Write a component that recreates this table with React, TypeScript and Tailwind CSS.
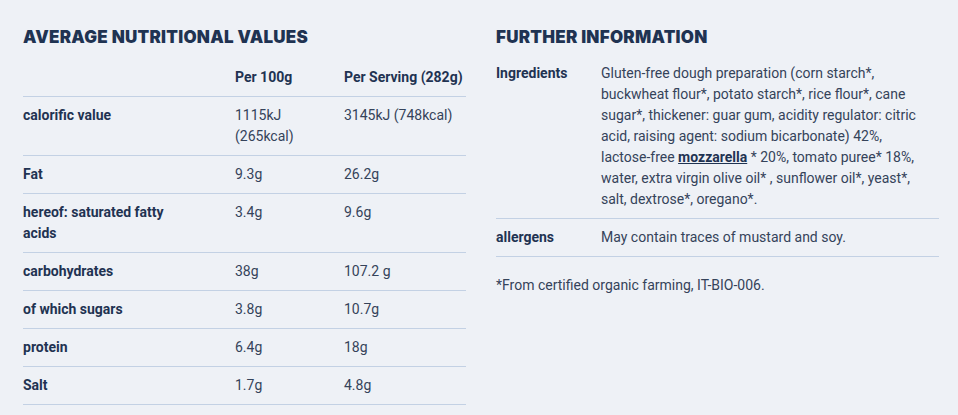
const nutrition = [
  { label: ["calorific value"], a: ["1115kJ", "(265kcal)"], b: "3145kJ (748kcal)" },
  { label: ["Fat"], a: ["9.3g"], b: "26.2g" },
  { label: ["hereof: saturated fatty", "acids"], a: ["3.4g"], b: "9.6g" },
  { label: ["carbohydrates"], a: ["38g"], b: "107.2 g" },
  { label: ["of which sugars"], a: ["3.8g"], b: "10.7g" },
  { label: ["protein"], a: ["6.4g"], b: "18g" },
  { label: ["Salt"], a: ["1.7g"], b: "4.8g" },
]

function Heading({ children }: { children: React.ReactNode }) {
  return (
    <h2 className="font-['Inter',sans-serif] text-[17px] leading-[24px] font-black uppercase tracking-[0.015em] text-[#1f3352]">
      {children}
    </h2>
  )
}

export default function App() {
  return (
    <div className="w-[958px] h-[415px] bg-[#eef1f6] overflow-hidden font-['Roboto',sans-serif] text-[14px] leading-[21px] text-[#35435a]">
      <div className="grid grid-cols-[443px_443px] gap-[30px] pl-[23px] pt-[25px]">
        {/* left: nutrition table */}
        <section>
          <Heading>Average nutritional values</Heading>
          <div className="mt-[10px]">
            <div className="grid grid-cols-[212px_109px_1fr] py-2 border-b border-[#c3d1e4] font-bold text-[#1f3352]">
              <span />
              <span>Per 100g</span>
              <span>Per Serving (282g)</span>
            </div>
            {nutrition.map((row) => (
              <div
                key={row.label[0]}
                className="grid grid-cols-[212px_109px_1fr] py-2 border-b border-[#c3d1e4]"
              >
                <div className="font-bold text-[#1f3352]">
                  {row.label.map((l) => (
                    <div key={l}>{l}</div>
                  ))}
                </div>
                <div>
                  {row.a.map((v) => (
                    <div key={v}>{v}</div>
                  ))}
                </div>
                <div>{row.b}</div>
              </div>
            ))}
          </div>
        </section>

        {/* right: further info */}
        <section>
          <Heading>Further information</Heading>
          <div className="mt-[6px]">
            <div className="grid grid-cols-[105px_1fr] py-2 border-b border-[#c3d1e4]">
              <span className="font-bold text-[#1f3352]">Ingredients</span>
              <p className="pr-4">
                Gluten-free dough preparation (corn starch*,<br />
                buckwheat flour*, potato starch*, rice flour*, cane<br />
                sugar*, thickener: guar gum, acidity regulator: citric<br />
                acid, raising agent: sodium bicarbonate) 42%,<br />
                lactose-free{" "}
                <a className="font-bold underline text-[#1f3352]">mozzarella</a> * 20%, tomato puree* 18%,<br />
                water, extra virgin olive oil* , sunflower oil*, yeast*,<br />
                salt, dextrose*, oregano*.
              </p>
            </div>
            <div className="grid grid-cols-[105px_1fr] py-2 border-b border-[#c3d1e4]">
              <span className="font-bold text-[#1f3352]">allergens</span>
              <p>May contain traces of mustard and soy.</p>
            </div>
            <p className="mt-[18px]">*From certified organic farming, IT-BIO-006.</p>
          </div>
        </section>
      </div>
    </div>
  )
}
